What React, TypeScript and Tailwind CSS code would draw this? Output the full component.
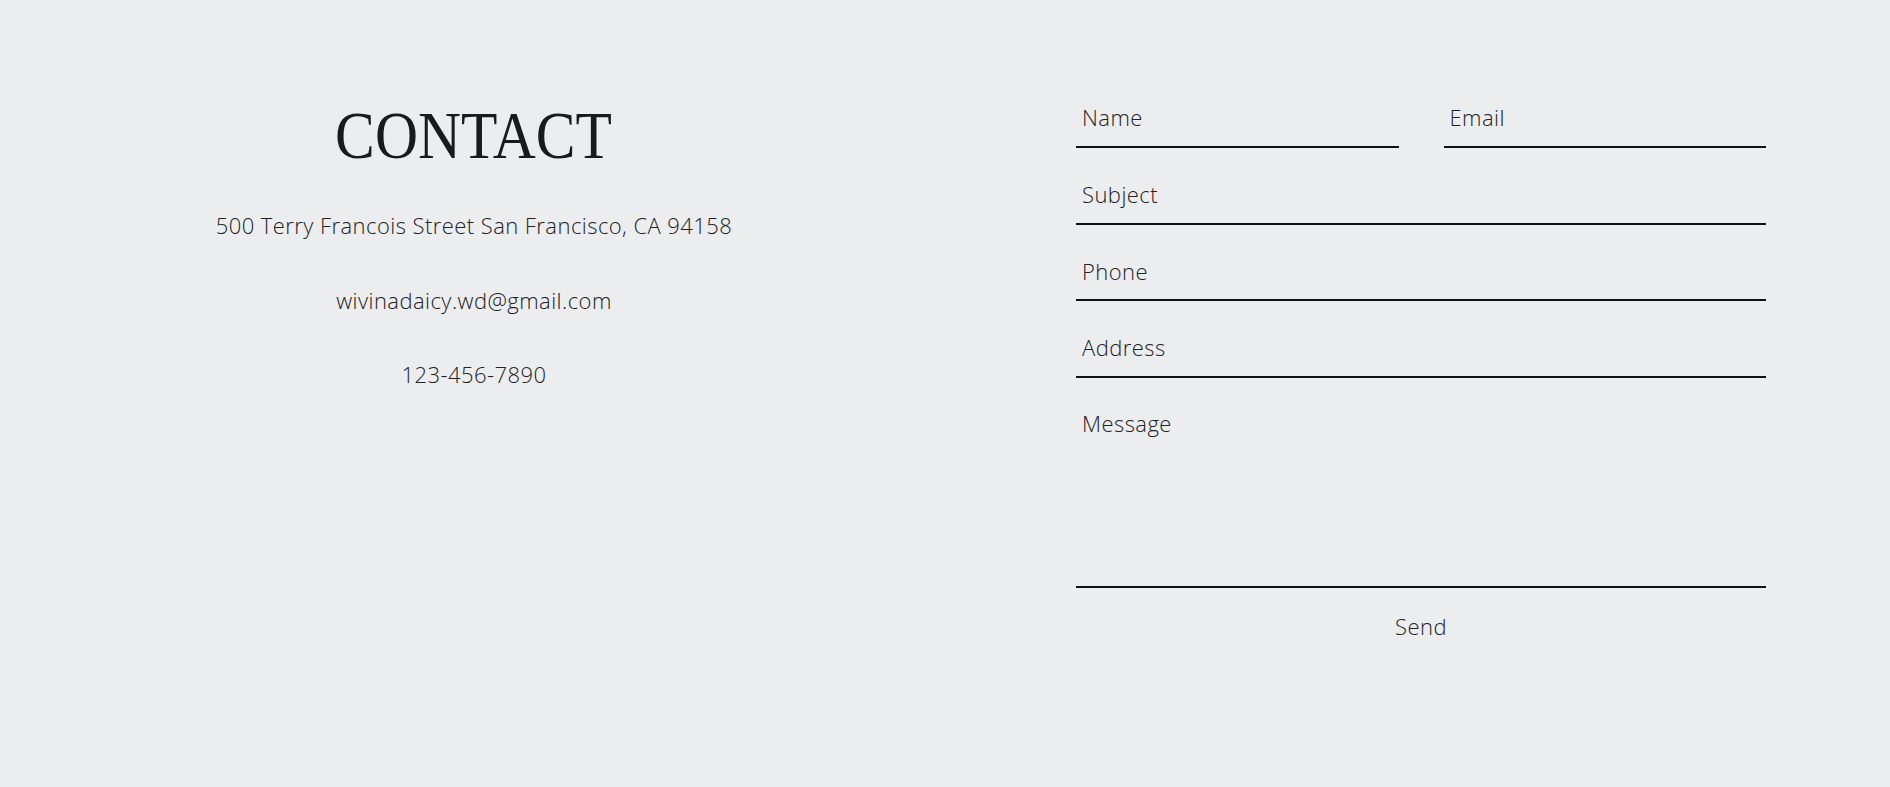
import React from 'react'

const sans = "font-['Open_Sans','Lato',sans-serif]"

function Field({ label }: { label: string }) {
    return (
        <input
            type="text"
            placeholder={label}
            className={`${sans} block w-full h-[76.67px] bg-transparent border-b-2 border-[#111] px-[6px] pt-[34px] pb-[16.67px] text-[22px] font-light leading-[24px] tracking-[0.02em] text-[#222] placeholder:text-[#222] outline-none`}
        />
    )
}

export default function App() {
    return (
        <div className="w-full min-h-[787px] bg-[#ecedef] flex text-[#222]">
            {/* Left: contact info */}
            <div className={`${sans} w-[948px] flex flex-col items-center pt-[102px] text-[22px] font-light leading-[24px] tracking-[0.02em]`}>
                <h1 className="font-['Liberation_Serif','DejaVu_Serif',serif] text-[67px] font-normal leading-none tracking-normal text-[#1a1a1a] scale-x-[0.89]">
                    CONTACT
                </h1>
                <p className="mt-[43.5px]">500 Terry Francois Street San Francisco, CA 94158</p>
                <p className="mt-[51px]">wivinadaicy.wd@gmail.com</p>
                <p className="mt-[50px]">123-456-7890</p>
            </div>

            {/* Right: form */}
            <form className="ml-[128px] w-[690px] pt-[71.3px] flex flex-col">
                <div className="flex gap-[45px]">
                    <Field label="Name" />
                    <Field label="Email" />
                </div>
                <Field label="Subject" />
                <Field label="Phone" />
                <Field label="Address" />
                <textarea
                    placeholder="Message"
                    className={`${sans} block w-full h-[210px] resize-none bg-transparent border-b-2 border-[#111] px-[6px] pt-[33px] text-[22px] font-light leading-[24px] tracking-[0.02em] text-[#222] placeholder:text-[#222] outline-none`}
                />
                <button
                    type="button"
                    className={`${sans} mt-[26.5px] self-center text-[22px] font-light leading-[24px] tracking-[0.02em] text-[#222]`}
                >
                    Send
                </button>
            </form>
        </div>
    )
}
